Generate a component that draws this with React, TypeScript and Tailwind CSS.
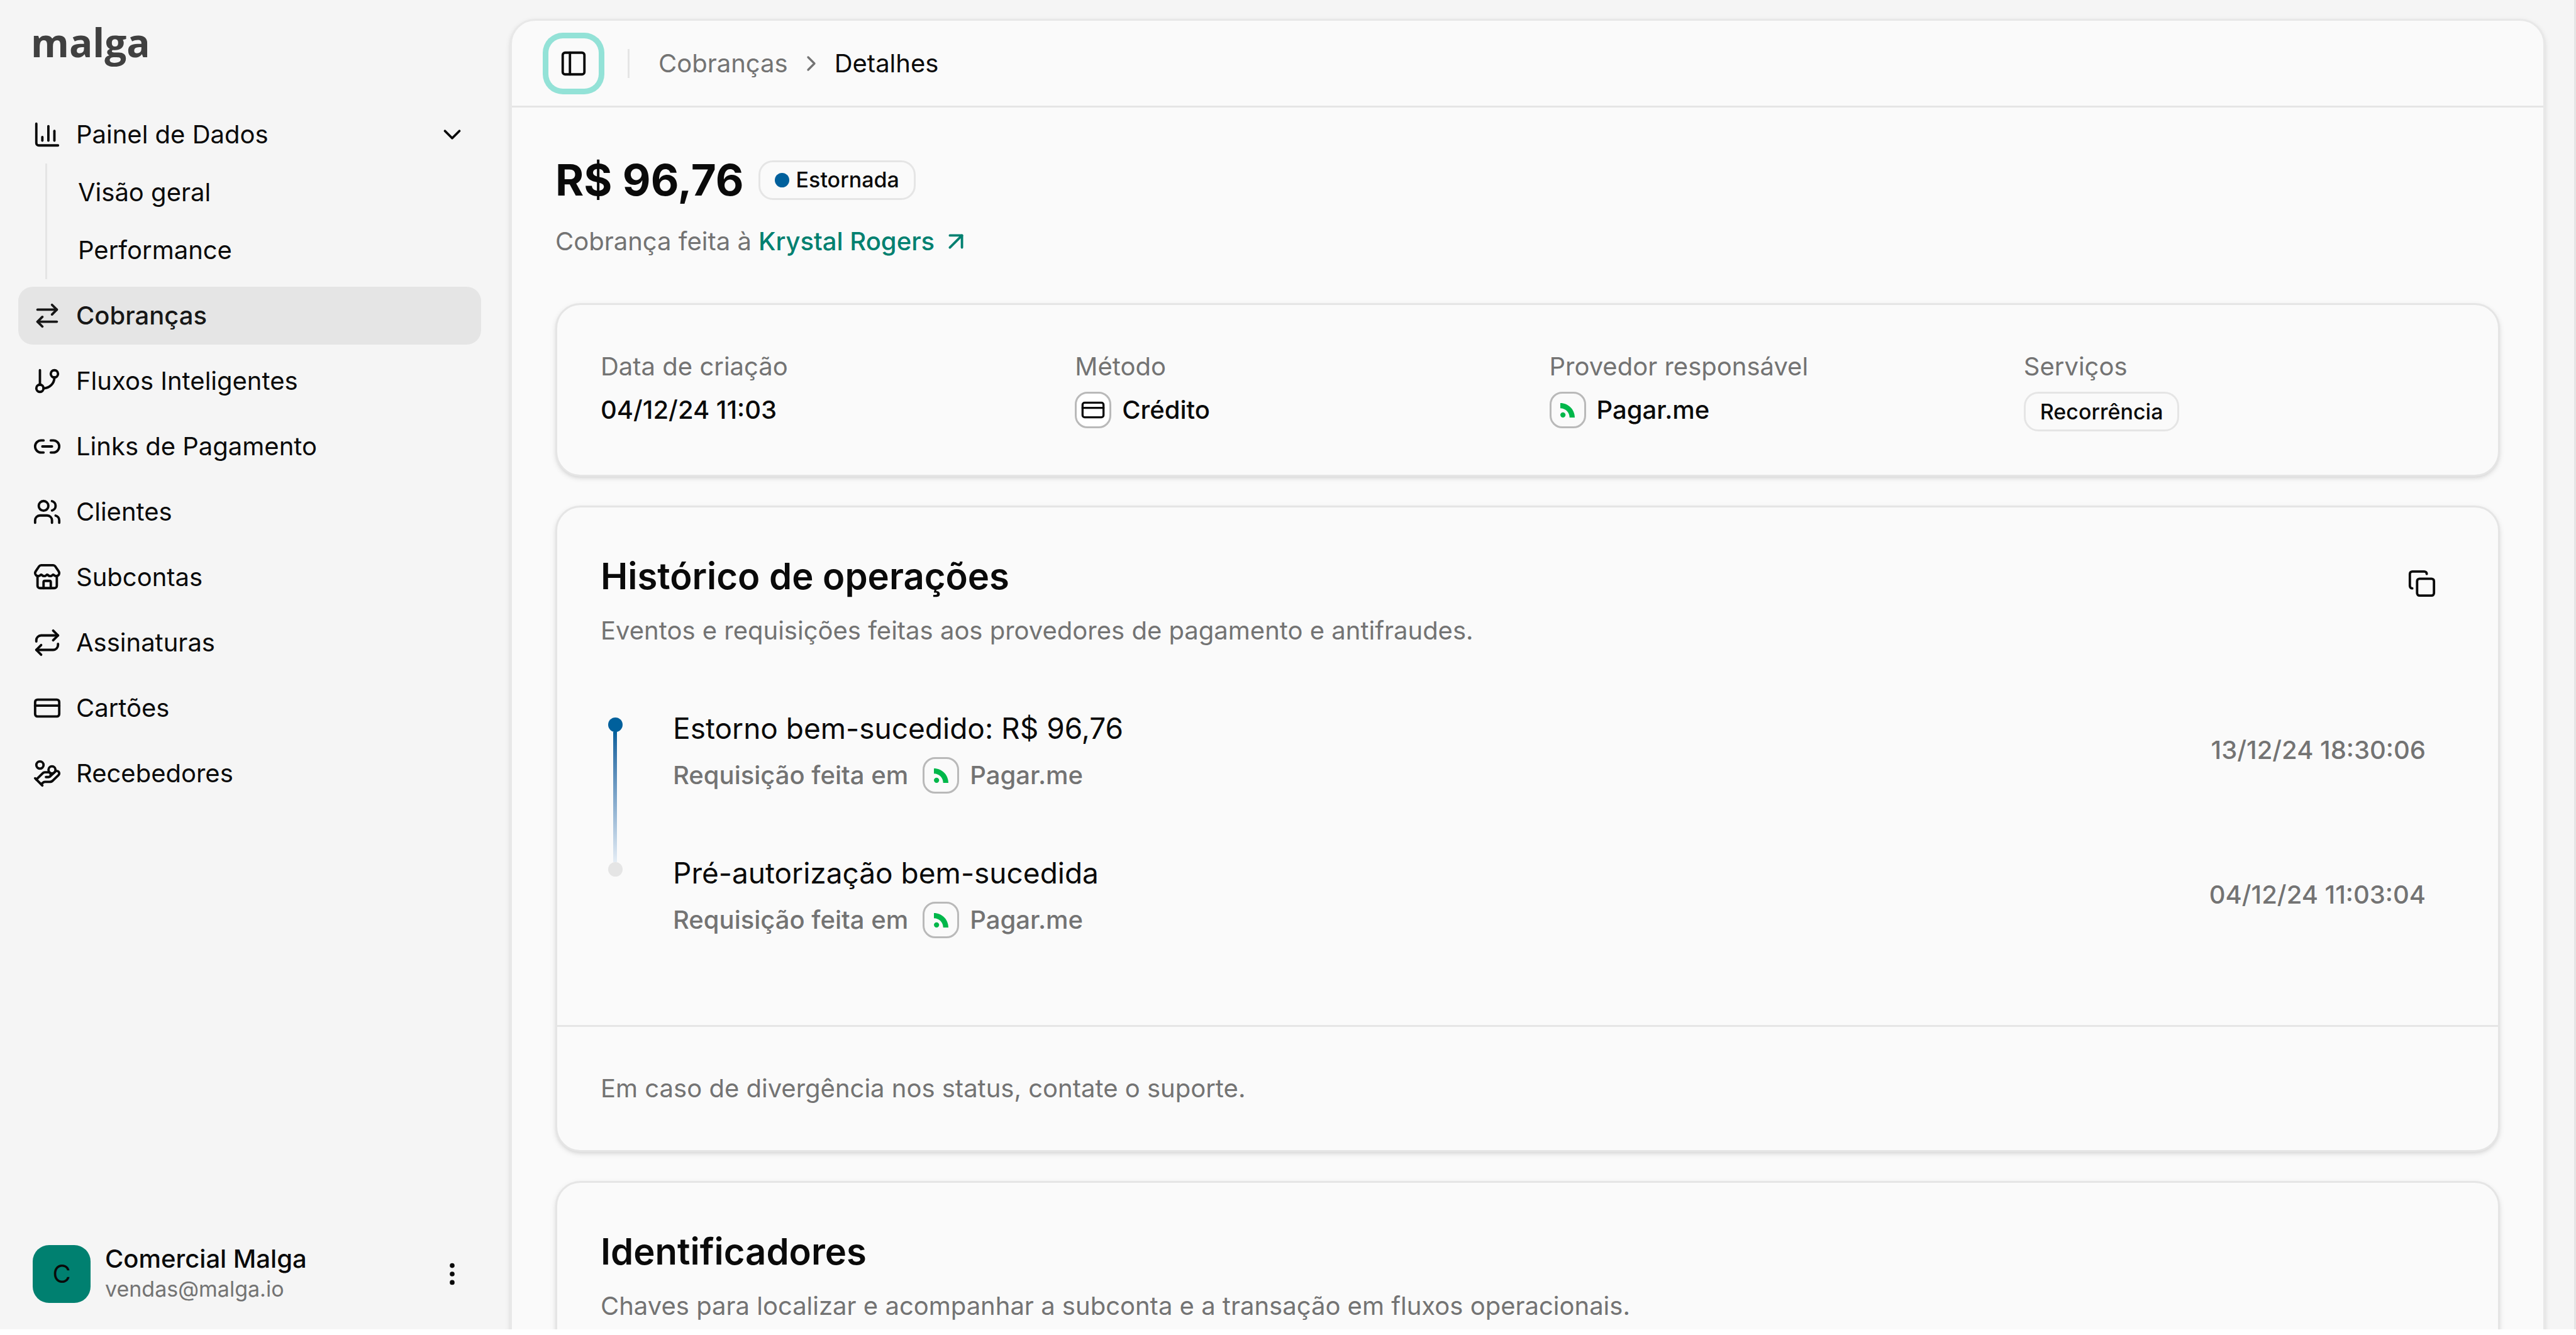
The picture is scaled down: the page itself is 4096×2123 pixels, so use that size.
import React, { useState } from "react";
import {
  ArrowRightLeft,
  ArrowUpRight,
  ChartColumn,
  ChevronDown,
  ChevronRight,
  Copy,
  CreditCard,
  EllipsisVertical,
  GitBranch,
  HandCoins,
  Link2,
  PanelLeft,
  Repeat,
  Store,
  Users,
  type LucideIcon,
} from "lucide-react";
import clsx from "clsx";

const NAV_ITEMS: Array<{ label: string; icon: LucideIcon; active?: boolean }> = [
  { label: "Cobranças", icon: ArrowRightLeft, active: true },
  { label: "Fluxos Inteligentes", icon: GitBranch },
  { label: "Links de Pagamento", icon: Link2 },
  { label: "Clientes", icon: Users },
  { label: "Subcontas", icon: Store },
  { label: "Assinaturas", icon: Repeat },
  { label: "Cartões", icon: CreditCard },
  { label: "Recebedores", icon: HandCoins },
];

const OPERATIONS = [
  { title: "Estorno bem-sucedido: R$ 96,76", provider: "Pagar.me", date: "13/12/24 18:30:06" },
  { title: "Pré-autorização bem-sucedida", provider: "Pagar.me", date: "04/12/24 11:03:04" },
];

function PagarmeLogo() {
  return (
    <svg viewBox="0 0 72 72" className="size-[23px]" fill="#00b74a" aria-hidden="true">
      <path d="M0 0C40 0 72 32 72 72H46C46 46 26 26 0 26Z" />
      <circle cx="13" cy="59" r="13" />
    </svg>
  );
}

function IconBox({ white, children }: { white?: boolean; children: React.ReactNode }) {
  return (
    <span
      className={clsx(
        "flex size-[58px] shrink-0 items-center justify-center rounded-[20px] border-[3px] border-[#b9b9b9]",
        white && "bg-white"
      )}
    >
      {children}
    </span>
  );
}

function Badge({ children }: { children: React.ReactNode }) {
  return (
    <span className="inline-flex h-[63px] items-center gap-[11px] rounded-[23px] border-[3px] border-[#e5e5e5] px-[23px] text-[34px] leading-[46px] font-medium">
      {children}
    </span>
  );
}

function Card({ children }: { children: React.ReactNode }) {
  return (
    <section className="rounded-[40px] border-[3px] border-[#e5e5e5] bg-[#fafafa] shadow-[0_3px_9px_0_rgba(0,0,0,0.1),0_3px_6px_-3px_rgba(0,0,0,0.1)]">
      {children}
    </section>
  );
}

function CardHeading({ title, description }: { title: string; description: string }) {
  return (
    <div className="flex flex-col gap-[17px]">
      <h2 className="text-[58px] leading-[81px] font-semibold">{title}</h2>
      <p className="text-[#737373]">{description}</p>
    </div>
  );
}

function Detail({ label, children }: { label: string; children: React.ReactNode }) {
  return (
    <div className="flex flex-col gap-[11px]">
      <dt className="text-[#737373]">{label}</dt>
      <dd className="flex items-center gap-[17px] font-medium">{children}</dd>
    </div>
  );
}

function Sidebar() {
  const [open, setOpen] = useState(true);

  return (
    <aside className="flex w-[811px] shrink-0 flex-col pt-[21px] pr-[46px] pb-[42px] pl-[29px]">
      <a href="#" className="pl-[20px] font-['Open_Sans',sans-serif] text-[62px] leading-[92px] font-bold text-[#404040]">
        malga
      </a>

      <nav className="mt-[55px] flex flex-col gap-[12px]">
        <div>
          <button
            type="button"
            aria-expanded={open}
            onClick={() => setOpen((o) => !o)}
            className="flex h-[92px] w-full items-center gap-[23px] rounded-[23px] px-[23px]"
          >
            <ChartColumn className="size-[46px]" />
            <span>Painel de Dados</span>
            <ChevronDown className="ml-auto size-[46px]" />
          </button>
          {open && (
            <ul className="ml-[43px] border-l-[3px] border-[#e5e5e5] pl-[49px]">
              <li>
                <a href="#" className="flex h-[92px] items-center">Visão geral</a>
              </li>
              <li>
                <a href="#" className="flex h-[92px] items-center">Performance</a>
              </li>
            </ul>
          )}
        </div>

        {NAV_ITEMS.map(({ label, icon: Icon, active }) => (
          <a
            key={label}
            href="#"
            className={clsx(
              "flex h-[92px] items-center gap-[23px] rounded-[23px] px-[23px]",
              active && "bg-[#e5e5e5] font-medium text-[#171717]"
            )}
          >
            <Icon className="size-[46px]" />
            {label}
          </a>
        ))}
      </nav>

      <button type="button" className="mt-auto flex h-[92px] items-center gap-[23px] px-[23px] text-left">
        <span className="flex size-[92px] items-center justify-center rounded-[26px] bg-[#008070]">C</span>
        <span className="flex flex-col">
          <span className="leading-[48px] font-medium">Comercial Malga</span>
          <span className="text-[34px] leading-[48px] text-[#737373]">vendas@malga.io</span>
        </span>
        <EllipsisVertical className="ml-auto size-[46px]" />
      </button>
    </aside>
  );
}

export default function App() {
  return (
    <div className="h-screen overflow-hidden bg-white pb-[9px] font-['Inter',sans-serif] text-[40px] leading-[58px] text-[#0a0a0a]">
      <div className="flex h-full overflow-hidden border-r-[3px] border-[#e5e5e5] bg-[#f5f5f5]">
        <Sidebar />

        <main className="mt-[30px] mr-[46px] min-w-0 flex-1">
          <div className="min-h-full rounded-[40px] border-[3px] border-[#e8e8e8] bg-[#fafafa] shadow-[0_3px_9px_0_rgba(0,0,0,0.1),0_3px_6px_-3px_rgba(0,0,0,0.1)]">
            <header className="flex h-[138px] items-center gap-[46px] border-b-[3px] border-[#e5e5e5] px-[58px]">
              <button
                type="button"
                aria-label="Alternar menu"
                className="flex size-[80px] items-center justify-center rounded-[23px] shadow-[0_0_0_9px_#93e2d7]"
              >
                <PanelLeft className="size-[46px]" />
              </button>
              <span className="h-[46px] w-[3px] bg-[#e5e5e5]" />
              <nav aria-label="Breadcrumb" className="flex items-center gap-[17px]">
                <a href="#" className="text-[#737373]">Cobranças</a>
                <ChevronRight className="size-[40px] text-[#737373]" />
                <span aria-current="page">Detalhes</span>
              </nav>
            </header>

            <div className="flex flex-col gap-[46px] px-[69px] pt-[69px] pb-[69px]">
              <div className="mb-[23px] flex flex-col gap-[23px]">
                <div className="flex items-center gap-[23px]">
                  <h1 className="text-[69px] leading-[92px] font-bold">R$ 96,76</h1>
                  <Badge>
                    <span className="size-[23px] rounded-full bg-[#00609c]" />
                    Estornada
                  </Badge>
                </div>
                <p className="flex items-center gap-[11px] text-[#737373]">
                  Cobrança feita à
                  <a href="#" className="flex items-center gap-[11px] font-medium text-[#008070]">
                    Krystal Rogers
                    <ArrowUpRight className="size-[46px]" />
                  </a>
                </p>
              </div>

              <Card>
                <dl className="grid grid-cols-4 gap-[69px] p-[69px]">
                  <Detail label="Data de criação">04/12/24 11:03</Detail>
                  <Detail label="Método">
                    <IconBox white>
                      <CreditCard className="size-[40px]" />
                    </IconBox>
                    Crédito
                  </Detail>
                  <Detail label="Provedor responsável">
                    <IconBox>
                      <PagarmeLogo />
                    </IconBox>
                    Pagar.me
                  </Detail>
                  <Detail label="Serviços">
                    <Badge>Recorrência</Badge>
                  </Detail>
                </dl>
              </Card>

              <Card>
                <div className="flex items-start justify-between px-[69px] pt-[69px]">
                  <CardHeading
                    title="Histórico de operações"
                    description="Eventos e requisições feitas aos provedores de pagamento e antifraudes."
                  />
                  <button type="button" aria-label="Copiar" className="flex size-[104px] items-center justify-center">
                    <Copy className="size-[46px]" />
                  </button>
                </div>

                <ol className="flex flex-col px-[69px] pt-[92px] pb-[46px]">
                  {OPERATIONS.map((op, i) => (
                    <li key={op.date} className="flex gap-[69px]">
                      <div className="flex w-[46px] flex-col items-center pt-[17px]">
                        <span className={clsx("size-[23px] shrink-0 rounded-full", i === 0 ? "bg-[#00609c]" : "bg-[#e5e5e5]")} />
                        {/* a linha liga este evento ao próximo */}
                        {i < OPERATIONS.length - 1 && (
                          <span className="-mb-[17px] w-[6px] flex-1 bg-linear-to-b from-[#00609c] to-[#e5edf5]" />
                        )}
                      </div>
                      <div className="flex flex-1 items-center justify-between pr-[46px] pb-[92px]">
                        <div className="flex flex-col gap-[11px]">
                          <h3 className="text-[46px] leading-[69px]">{op.title}</h3>
                          <p className="flex items-center font-medium text-[#737373]">
                            Requisição feita em
                            <span className="ml-[23px] flex items-center gap-[17px]">
                              <IconBox>
                                <PagarmeLogo />
                              </IconBox>
                              {op.provider}
                            </span>
                          </p>
                        </div>
                        <time className="font-medium text-[#737373]">{op.date}</time>
                      </div>
                    </li>
                  ))}
                </ol>

                <footer className="border-t-[3px] border-[#e5e5e5] p-[69px] text-[#737373]">
                  Em caso de divergência nos status, contate o suporte.
                </footer>
              </Card>

              <Card>
                <div className="p-[69px]">
                  <CardHeading
                    title="Identificadores"
                    description="Chaves para localizar e acompanhar a subconta e a transação em fluxos operacionais."
                  />
                </div>
              </Card>
            </div>
          </div>
        </main>
      </div>
    </div>
  );
}
